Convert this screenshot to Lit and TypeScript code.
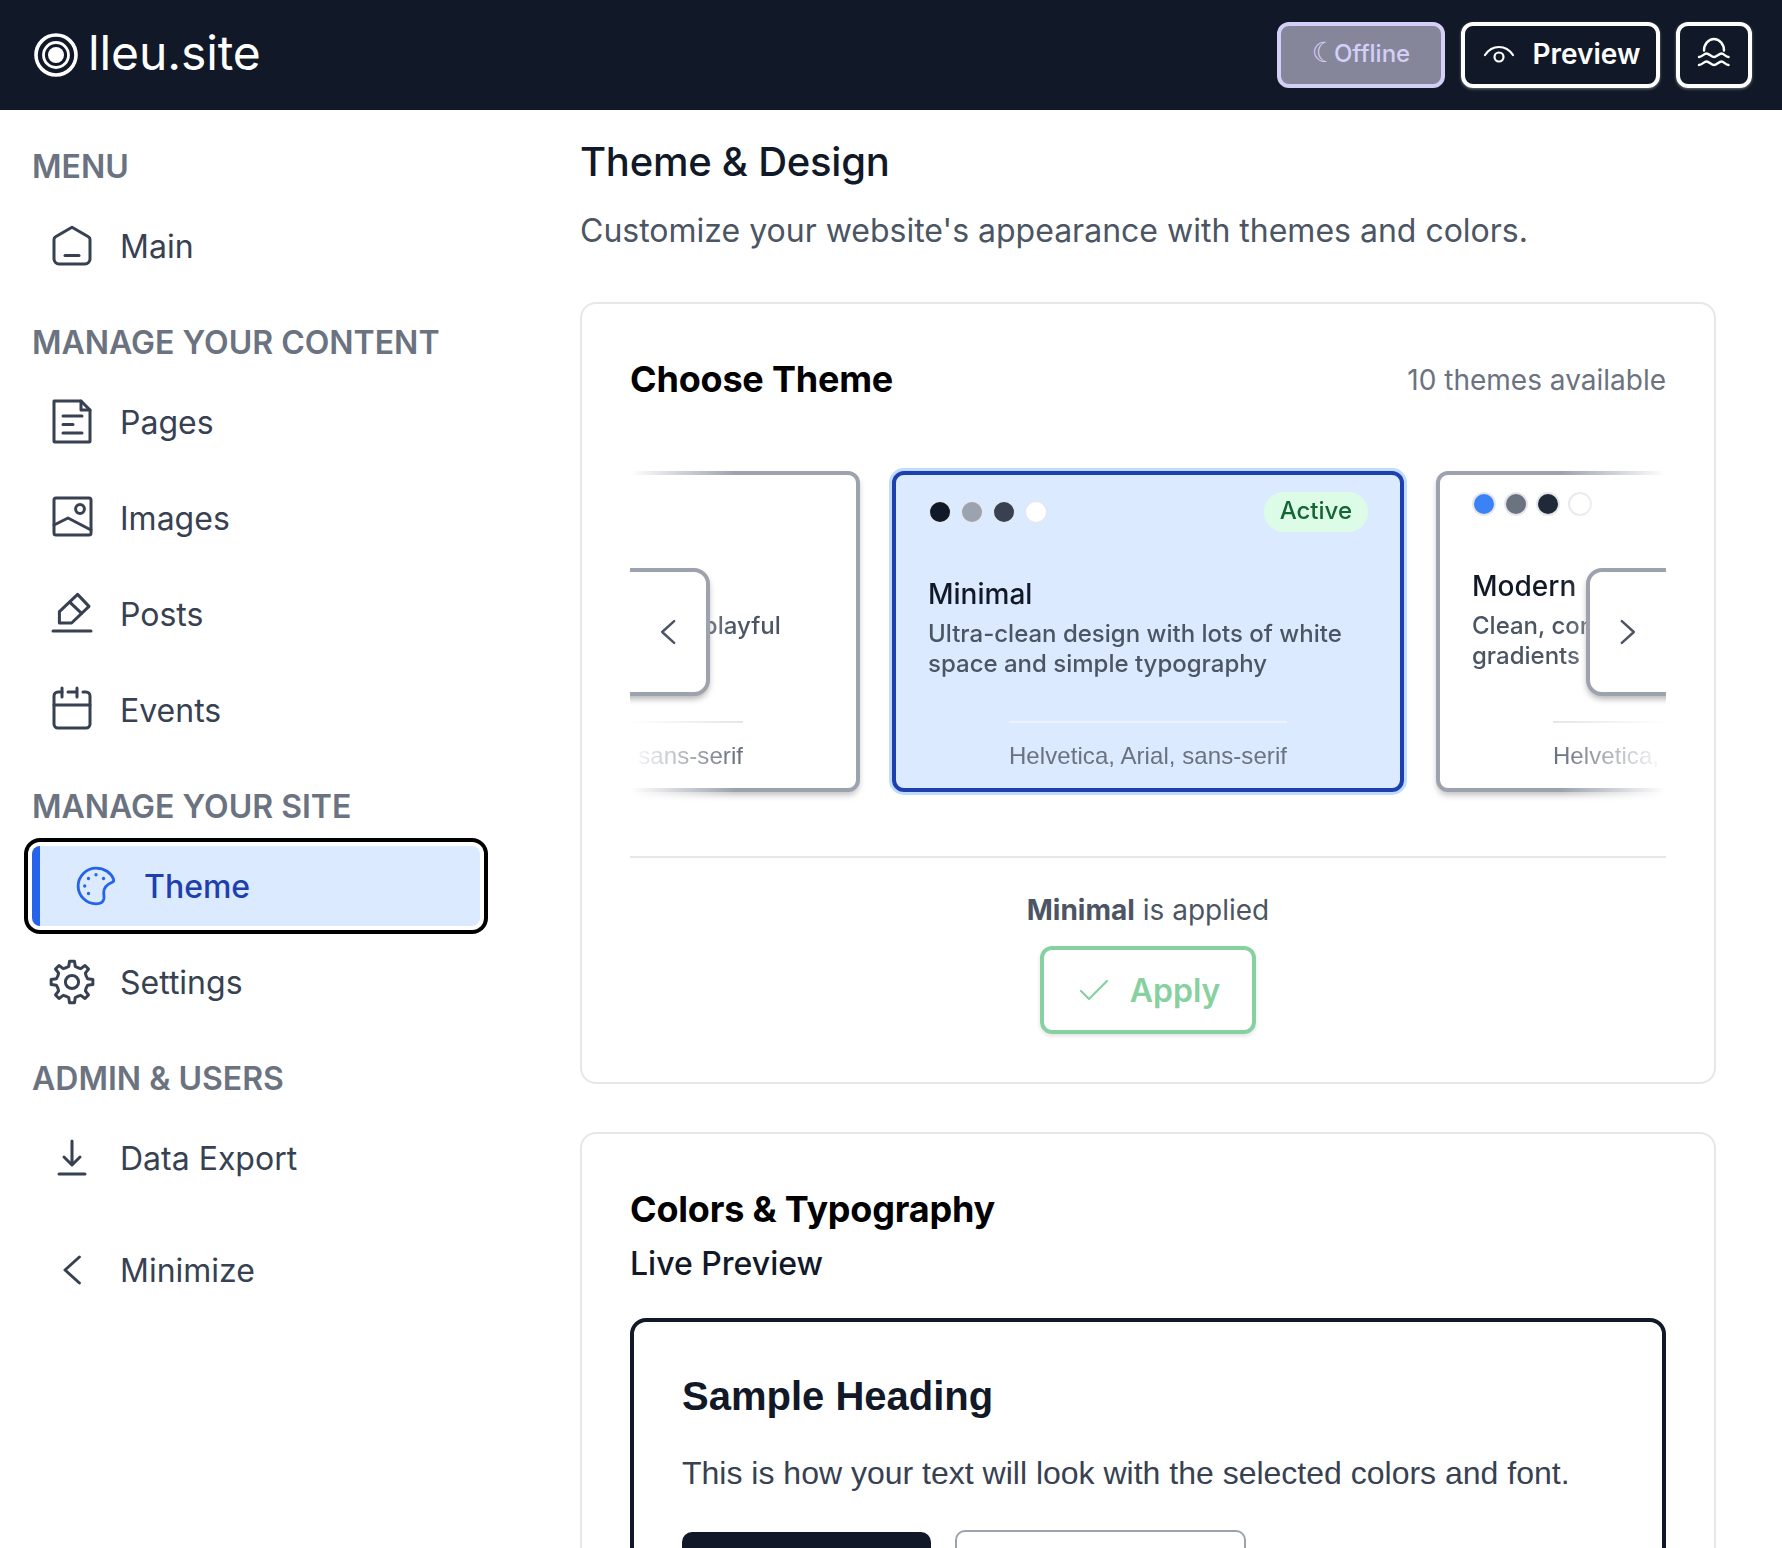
import { LitElement, html, css, svg } from "lit"
import { customElement } from "lit/decorators.js"

// 8 tooth gear outline, in a 24 box
function gearPath() {
  const pts: string[] = []
  const teeth = 8
  for (let i = 0; i < teeth; i++) {
    const a = (i * Math.PI * 2) / teeth - Math.PI / 2
    const step = (Math.PI * 2) / teeth
    const rows: [number, number][] = [
      [-0.5, 7.7],
      [-0.26, 8],
      [-0.15, 10.5],
      [0.15, 10.5],
      [0.26, 8],
    ]
    for (const [o, r] of rows) {
      const t = a + o * step
      pts.push(`${(12 + r * Math.cos(t)).toFixed(2)} ${(12 + r * Math.sin(t)).toFixed(2)}`)
    }
  }
  return "M" + pts.join("L") + "Z"
}

const icons: Record<string, unknown> = {
  home: svg`<path d="M12 2.600 20.200 7.400a1.500 1.500 0 0 1 .8 1.300V18.500a2.500 2.500 0 0 1-2.500 2.500h-13A2.500 2.500 0 0 1 3 18.500V8.700a1.500 1.500 0 0 1 .8-1.300L12 2.600Z"/><path d="M8.500 16.800h7"/>`,
  pages: svg`<path d="M3 1.500H16.500L21 6V21.500a.5.5 0 0 1-.5.5H3.500a.5.5 0 0 1-.5-.5V2a.5.5 0 0 1 .5-.5Z"/><path d="M16.500 1.500V6H21"/><path d="M7.500 9h9.500M7.500 13.300h5M7.500 17.500h9.500"/>`,
  images: svg`<rect x="3" y="2" width="18.500" height="18.500" rx="1"/><circle cx="16" cy="7.500" r="2.200"/><path d="M3 15.500 10 12l11.500 6"/>`,
  posts: svg`<path d="M5.700 16.500V10.800L14.800 2.200 20.500 8.200 11.800 16.500H5.700Z"/><path d="M11 6.200l5.800 5.500"/><path d="M2.500 20.500h19"/>`,
  events: svg`<path d="M7 3H5a2 2 0 0 0-2 2V19a2 2 0 0 0 2 2H19a2 2 0 0 0 2-2V5a2 2 0 0 0-2-2H17.500"/><path d="M3 9.500h18"/><path d="M7 1v4.500M14.500 1v4.500M10 3h4.500"/>`,
  palette: svg`<path d="M12 21.500C6.800 21.500 2.500 17.200 2.500 12S6.800 2.500 12 2.500c4.500 0 8 2.500 9.300 5.800.3.800 0 1.400-.7 1.700-2.500 1-4.500 2.500-4.500 5.500 0 1 .3 2 .1 3.300-.3 1.500-1.500 2.700-4.200 2.700Z"/><g fill="currentColor" stroke-width="1"><circle cx="12" cy="6" r=".4"/><circle cx="16" cy="8" r=".4"/><circle cx="8" cy="8" r=".4"/><circle cx="6" cy="12" r=".4"/><circle cx="8" cy="16" r=".4"/></g>`,
  gear: svg`<path d=${gearPath()}/><circle cx="12" cy="12" r="3.300"/>`,
  download: svg`<path d="M12 3.500v12M8 11.500l4 4 4-4M5.500 20h13"/>`,
  back: svg`<path d="M15.700 5.500 8.500 12l7.200 6.500"/>`,
  next: svg`<path d="M8.300 5.500 15.500 12l-7.200 6.500"/>`,
}

function icon(name: string) {
  return html`<svg class="ic" viewBox="0 0 24 24" fill="none" stroke="currentColor" stroke-width="1.5" stroke-linecap="round" stroke-linejoin="round">${icons[name]}</svg>`
}

@customElement("app-root")
export class AppRoot extends LitElement {
  static styles = css`
    :host {
      display: block;
      height: 1548px;
      overflow: hidden;
      background: #fff;
      font-family: "Inter", "Noto Sans", sans-serif;
      color: #111827;
    }
    * {
      box-sizing: border-box;
    }
    header {
      height: 110px;
      background: #111827;
      display: flex;
      align-items: center;
      justify-content: space-between;
      padding: 0 30px 0 34px;
    }
    .brand {
      display: flex;
      align-items: center;
      gap: 11px;
      color: #fff;
      font-size: 48px;
      font-weight: 400;
      letter-spacing: -0.1px;
    }
    .brand span {
      margin-top: -6px;
      margin-left: -1px;
    }
    .brand svg {
      width: 44px;
      height: 44px;
    }
    .actions {
      display: flex;
      gap: 16px;
    }
    .hbtn {
      height: 66px;
      border: 4px solid #fff;
      border-radius: 12px;
      display: flex;
      align-items: center;
      justify-content: center;
      color: #fff;
      font-size: 28px;
      font-weight: 600;
      box-shadow: 0 1px 3px rgba(255, 255, 255, 0.4);
    }
    .hbtn span {
      margin-top: -2px;
    }
    .offline {
      width: 168px;
      background: #85869a;
      border-color: #d4cff6;
      color: #d4cff6;
      font-size: 24px;
      font-weight: 500;
      box-shadow: none;
      gap: 5px;
    }
    .offline span {
      margin-top: -4px;
    }
    .offline .moon {
      font-size: 28px;
      font-weight: 700;
      line-height: 1;
      font-family: "DejaVu Sans", sans-serif;
      margin-right: -8px;
    }
    .preview {
      width: 199px;
      gap: 18px;
      padding-left: 2px;
    }
    .preview svg {
      width: 32px;
      height: 32px;
    }
    .user {
      width: 76px;
    }
    .user svg {
      width: 36px;
      height: 36px;
    }
    .body {
      display: flex;
    }
    aside {
      width: 580px;
      flex: none;
      padding: 27px 0 0 32px;
    }
    h4 {
      margin: 0;
      font-size: 32px;
      line-height: 60px;
      height: 60px;
      font-weight: 600;
      color: #6b7280;
    }
    .group {
      margin-bottom: 27px;
    }
    nav {
      width: 448px;
      display: flex;
      flex-direction: column;
      gap: 16px;
      margin-top: 9px;
    }
    .item {
      height: 80px;
      display: flex;
      align-items: center;
      gap: 24px;
      padding-left: 16px;
      font-size: 32px;
      color: #374151;
      border-radius: 8px;
    }
    .ic {
      width: 48px;
      height: 48px;
      flex: none;
    }
    .item.active {
      background: #dbeafe;
      color: #1e40af;
      font-weight: 500;
      border-left: 8px solid #2563eb;
      padding-left: 32px;
      box-shadow: 0 0 0 4px #fff, 0 0 0 8px #000;
    }
    .item.active .ic {
      color: #2563eb;
      transform: scale(0.94);
    }
    .minimize {
      margin-top: 32px;
    }
    main {
      width: 1136px;
      flex: none;
      padding-top: 24px;
    }
    h1 {
      margin: 0;
      font-size: 40px;
      line-height: 56px;
      font-weight: 500;
      letter-spacing: -0.25px;
    }
    .sub {
      margin: 17px 0 0;
      font-size: 32px;
      line-height: 48px;
      color: #4b5563;
    }
    .card {
      margin-top: 47px;
      border: 2px solid #e5e7eb;
      border-radius: 16px;
      padding: 47px 48px 48px;
    }
    .card + .card {
      margin-top: 48px;
    }
    .card.two {
      height: 600px;
      padding-top: 47px;
    }
    .card-head {
      display: flex;
      justify-content: space-between;
      align-items: center;
    }
    h2 {
      margin: 0;
      font-size: 36px;
      line-height: 56px;
      font-weight: 700;
      color: #000;
      letter-spacing: -0.2px;
    }
    .count {
      font-size: 28px;
      color: #6b7280;
      margin-top: 2px;
    }
    .carousel {
      position: relative;
      margin-top: 56px;
      height: 393px;
      overflow: hidden;
    }
    .fade {
      padding-top: 8px;
      padding-bottom: 12px;
      -webkit-mask-image: linear-gradient(to right, transparent 0, #000 105px, #000 calc(100% - 105px), transparent 100%);
      mask-image: linear-gradient(to right, transparent 0, #000 105px, #000 calc(100% - 105px), transparent 100%);
    }
    .track {
      display: flex;
      gap: 32px;
      margin-left: -282px;
    }
    .theme {
      flex: none;
      width: 512px;
      height: 321px;
      border: 4px solid #9ca3af;
      border-radius: 12px;
      background: #fff;
      padding: 17px 32px 0;
      display: flex;
      flex-direction: column;
      box-shadow: 0 4px 6px -1px rgba(0, 0, 0, 0.25);
    }
    .theme.on {
      background: #dbeafe;
      border-color: #1e40af;
      box-shadow: 0 0 0 3px #bfdbfe;
    }
    .top {
      display: flex;
      justify-content: space-between;
      align-items: center;
      height: 24px;
    }
    .on .top {
      height: 40px;
    }
    .dots {
      display: flex;
      gap: 12px;
      margin-left: 2px;
    }
    .dot {
      width: 20px;
      height: 20px;
      border-radius: 50%;
      box-shadow: 0 0 0 2px #e5e7eb;
    }
    .on .dot {
      box-shadow: 0 0 0 1px #e5e7eb;
    }
    .badge {
      background: #dcfce7;
      color: #166534;
      font-size: 24px;
      font-weight: 500;
      height: 40px;
      line-height: 38px;
      padding: 0 16px;
      border-radius: 20px;
    }
    .tname {
      margin-top: 50px;
      font-size: 28px;
      line-height: 40px;
      font-weight: 500;
      color: #111827;
    }
    .on .tname {
      margin-top: 42px;
    }
    .tdesc {
      font-size: 24px;
      line-height: 30px;
      color: #4b5563;
      font-weight: 500;
      height: 60px;
      margin-top: 5px;
    }
    .foot {
      margin: auto 0 0;
      align-self: center;
      border-top: 2px solid #e5e7eb;
      font-family: "Liberation Sans", Arial, sans-serif;
      font-size: 24px;
      letter-spacing: 0.07px;
      line-height: 32px;
      padding: 17px 0 16px;
      color: #6b7280;
      white-space: nowrap;
    }
    .on .foot {
      border-top-color: #eef2ff;
    }
    .arrow {
      position: absolute;
      top: 105px;
      width: 124px;
      height: 128px;
      border: 4px solid #9ca3af;
      border-radius: 16px;
      background: #fff;
      display: flex;
      align-items: center;
      justify-content: center;
      color: #4b5563;
      box-shadow: 0 4px 6px -1px rgba(0, 0, 0, 0.3);
    }
    .arrow .ic {
      width: 40px;
      height: 40px;
    }
    .arrow.l {
      left: -44px;
      padding-left: 40px;
    }
    .arrow.r {
      right: -44px;
      padding-right: 40px;
    }
    hr {
      margin: 0;
      border: 0;
      border-top: 2px solid #e5e7eb;
    }
    .applied {
      text-align: center;
      font-size: 28px;
      line-height: 40px;
      color: #4b5563;
      margin-top: 32px;
    }
    .applied b {
      font-weight: 700;
    }
    .apply-row {
      display: flex;
      justify-content: center;
      margin-top: 16px;
    }
    .apply {
      width: 216px;
      height: 88px;
      border: 4px solid #86d19f;
      border-radius: 12px;
      color: #86d19f;
      display: flex;
      align-items: center;
      justify-content: center;
      gap: 20px;
      padding-left: 2px;
      font-size: 32px;
      font-weight: 600;
      box-shadow: 0 2px 4px rgba(0, 0, 0, 0.12);
    }
    .apply svg {
      width: 32px;
      height: 32px;
    }
    .lead {
      margin: 3px 0 0;
      font-size: 32px;
      line-height: 48px;
      font-weight: 500;
      color: #111827;
    }
    .sample {
      margin-top: 30px;
      border: 4px solid #111827;
      border-radius: 16px;
      padding: 46px 48px;
      font-family: "Liberation Sans", Arial, sans-serif;
      height: 400px;
    }
    .sample h3 {
      margin: 0;
      font-size: 40px;
      line-height: 56px;
      font-weight: 700;
      color: #111827;
    }
    .sample p {
      margin: 25px 0 0;
      font-size: 32px;
      line-height: 48px;
      color: #374151;
    }
    .btns {
      display: flex;
      gap: 24px;
      margin-top: 35px;
      align-items: flex-start;
    }
    .b1 {
      width: 249px;
      height: 80px;
      background: #111827;
      border-radius: 10px;
    }
    .b2 {
      width: 291px;
      height: 80px;
      margin-top: -2px;
      border: 2px solid #9ca3af;
      border-radius: 10px;
    }
  `

  renderTheme(name: string, desc: string, cols: string[], on = false) {
    return html`<div class="theme ${on ? "on" : ""}">
      <div class="top">
        <div class="dots">${cols.map((c) => html`<span class="dot" style="background:${c}"></span>`)}</div>
        ${on ? html`<span class="badge">Active</span>` : ""}
      </div>
      <div class="tname">${name}</div>
      <div class="tdesc">${desc}</div>
      <div class="foot">Helvetica, Arial, sans-serif</div>
    </div>`
  }

  render() {
    return html`
      <header>
        <div class="brand">
          <svg viewBox="0 0 44 44" fill="none" stroke="#fff">
            <circle cx="22" cy="22" r="20" stroke-width="3.600"/>
            <circle cx="22" cy="22" r="12.500" stroke-width="2.800"/>
            <circle cx="22" cy="22" r="8" fill="#fff" stroke="none"/>
          </svg>
          <span>lleu.site</span>
        </div>
        <div class="actions">
          <div class="hbtn offline"><span class="moon">☾</span><span>Offline</span></div>
          <div class="hbtn preview">
            <svg viewBox="0 0 32 32" fill="none" stroke="#fff" stroke-width="2.200" stroke-linecap="round"><path d="M2 16C6 10 11 8 16 8s10 2 14 8"/><circle cx="16" cy="18" r="4.500"/></svg>
            <span>Preview</span>
          </div>
          <div class="hbtn user">
            <svg viewBox="0 0 36 36" fill="none" stroke="#fff" stroke-width="2.400" stroke-linecap="round"><path d="M8 13.500a10 11.500 0 0 1 20 0"/><path d="M3 20c3 0 5-3.500 7.500-3.500s5 3.500 7.500 3.500 5-3.500 7.500-3.500 4 3.500 7 3.500"/><path d="M3 28c3 0 5-3.500 7.500-3.500s5 3.500 7.500 3.500 5-3.500 7.500-3.500 4 3.500 7 3.500"/></svg>
          </div>
        </div>
      </header>
      <div class="body">
        <aside>
          <div class="group">
            <h4>MENU</h4>
            <nav><div class="item">${icon("home")}Main</div></nav>
          </div>
          <div class="group">
            <h4>MANAGE YOUR CONTENT</h4>
            <nav>
              <div class="item">${icon("pages")}Pages</div>
              <div class="item">${icon("images")}Images</div>
              <div class="item">${icon("posts")}Posts</div>
              <div class="item">${icon("events")}Events</div>
            </nav>
          </div>
          <div class="group">
            <h4>MANAGE YOUR SITE</h4>
            <nav>
              <div class="item active">${icon("palette")}Theme</div>
              <div class="item">${icon("gear")}Settings</div>
            </nav>
          </div>
          <div class="group">
            <h4>ADMIN &amp; USERS</h4>
            <nav><div class="item">${icon("download")}Data Export</div></nav>
          </div>
          <div class="item minimize">${icon("back")}Minimize</div>
        </aside>
        <main>
          <h1>Theme &amp; Design</h1>
          <p class="sub">Customize your website's appearance with themes and colors.</p>
          <section class="card">
            <div class="card-head">
              <h2>Choose Theme</h2>
              <span class="count">10 themes available</span>
            </div>
            <div class="carousel">
              <div class="fade">
                <div class="track">
                  ${this.renderTheme("Playful", "Vibrant colors and rounded playful design", ["#f59e0b", "#6b7280", "#1f2937", "#fff"])}
                  ${this.renderTheme("Minimal", "Ultra-clean design with lots of white space and simple typography", ["#111827", "#9ca3af", "#374151", "#fff"], true)}
                  ${this.renderTheme("Modern", "Clean, contemporary look with gradients", ["#3b82f6", "#6b7280", "#1f2937", "#fff"])}
                </div>
              </div>
              <div class="arrow l">${icon("back")}</div>
              <div class="arrow r">${icon("next")}</div>
            </div>
            <hr />
            <div class="applied"><b>Minimal</b> is applied</div>
            <div class="apply-row">
              <div class="apply">
                <svg viewBox="0 0 32 32" fill="none" stroke="currentColor" stroke-width="2.200" stroke-linecap="round" stroke-linejoin="round"><path d="M3 17l8 8L29 7"/></svg>
                Apply
              </div>
            </div>
          </section>
          <section class="card two">
            <h2>Colors &amp; Typography</h2>
            <h3 class="lead">Live Preview</h3>
            <div class="sample">
              <h3>Sample Heading</h3>
              <p>This is how your text will look with the selected colors and font.</p>
              <div class="btns"><div class="b1"></div><div class="b2"></div></div>
            </div>
          </section>
        </main>
      </div>
    `
  }
}
